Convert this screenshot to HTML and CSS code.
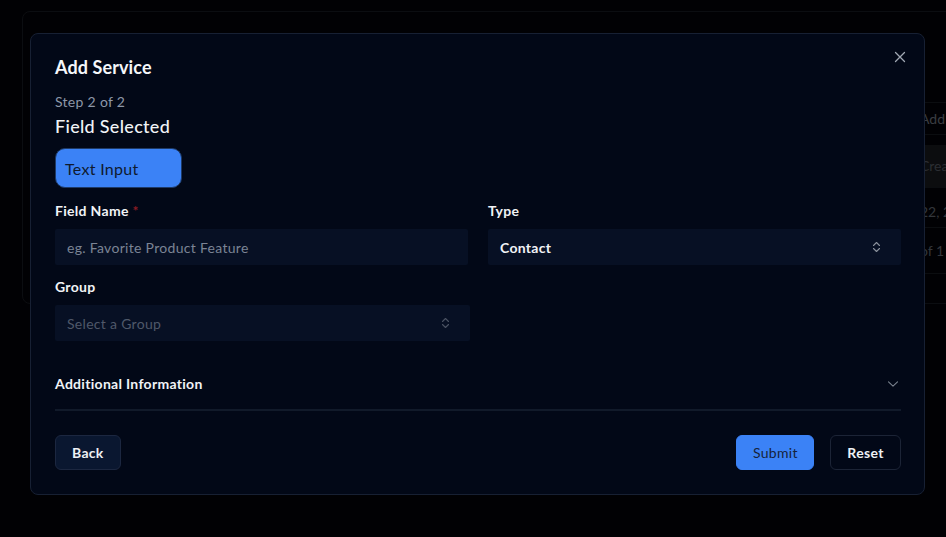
FILE: index.html
```html
<!DOCTYPE html>
<html lang="en">
<head>
    <meta charset="UTF-8">
    <meta name="viewport" content="width=device-width, initial-scale=1.0">
    <title>Services</title>
    <link rel="stylesheet" href="styles.css">
</head>
<body>
    <!-- Page behind the dialog -->
    <div class="page">
        <div class="bg-card">
            <div class="bg-table">
                <div class="bg-row bg-top">Add</div>
                <div class="bg-row bg-head">Crea</div>
                <div class="bg-row">22, 2</div>
                <div class="bg-row bg-foot">of 1</div>
            </div>
        </div>
    </div>

    <div class="overlay"></div>

    <!-- Add Service dialog -->
    <div class="modal">
        <button class="close-btn" aria-label="Close">
            <svg width="12" height="12" viewBox="0 0 12 12"><path d="M1.5 1.5l9 9M10.5 1.5l-9 9" stroke="currentColor" stroke-width="1.3" stroke-linecap="round"/></svg>
        </button>

        <h2 class="modal-title">Add Service</h2>
        <div class="step">Step 2 of 2</div>
        <div class="step-title">Field Selected</div>
        <div class="chip">Text Input</div>

        <div class="form-grid">
            <div class="field">
                <label>Field Name <span class="req">*</span></label>
                <input type="text" class="input" placeholder="eg. Favorite Product Feature">
            </div>
            <div class="field">
                <label>Type</label>
                <div class="select">
                    <span>Contact</span>
                    <svg class="updown" width="9" height="12" viewBox="0 0 9 12"><path d="M1.5 4.5L4.5 1.5 7.5 4.5M1.5 7.5L4.5 10.5 7.5 7.5" fill="none" stroke="currentColor" stroke-width="1.1" stroke-linecap="round" stroke-linejoin="round"/></svg>
                </div>
            </div>
            <div class="field field-group">
                <label>Group</label>
                <div class="select muted">
                    <span>Select a Group</span>
                    <svg class="updown" width="9" height="12" viewBox="0 0 9 12"><path d="M1.5 4.5L4.5 1.5 7.5 4.5M1.5 7.5L4.5 10.5 7.5 7.5" fill="none" stroke="currentColor" stroke-width="1.1" stroke-linecap="round" stroke-linejoin="round"/></svg>
                </div>
            </div>
        </div>

        <div class="accordion">
            <span>Additional Information</span>
            <svg width="12" height="8" viewBox="0 0 12 8"><path d="M1.5 1.8L6 6.2 10.5 1.8" fill="none" stroke="currentColor" stroke-width="1.1" stroke-linecap="round" stroke-linejoin="round"/></svg>
        </div>

        <div class="actions">
            <button class="btn btn-dark">Back</button>
            <div class="actions-right">
                <button class="btn btn-primary">Submit</button>
                <button class="btn btn-outline">Reset</button>
            </div>
        </div>
    </div>
</body>
</html>
```

FILE: styles.css
```css
body {
    margin: 0;
    background: #020205;
    font-family: Lato, "Noto Sans", sans-serif;
    letter-spacing: 0.3px;
    color: #f1f3f6;
    width: 946px;
    height: 537px;
    overflow: hidden;
}

/* Background page */
.page {
    padding: 11px 0 0 22px;
}
.bg-card {
    width: 960px;
    height: 293px;
    border: 1px solid #0e1014;
    border-radius: 8px;
    box-sizing: border-box;
}
.bg-table {
    margin: 90px 0 0 897px;
    font-size: 14px;
    letter-spacing: 0;
    color: #3d4046;
}
.bg-row {
    height: 31px;
    line-height: 31px;
    border-bottom: 1px solid #0e1013;
}
.bg-top {
    border-top: 1px solid #0e1013;
    color: #45484e;
    margin-bottom: 10px;
}
.bg-head {
    height: 42px;
    line-height: 42px;
    background: #0f1012;
    color: #34373c;
    margin-bottom: 8px;
}
.bg-foot {
    height: 45px;
    line-height: 45px;
}

.overlay {
    position: fixed;
    inset: 0;
    background: rgba(0, 0, 0, 0.15);
}

/* Dialog */
.modal {
    position: fixed;
    left: 30px;
    top: 33px;
    width: 895px;
    height: 462px;
    box-sizing: border-box;
    padding: 19px 23px 24px 24px;
    background: #020817;
    border: 1px solid #172033;
    border-radius: 8px;
}
.close-btn {
    position: absolute;
    top: 15px;
    right: 16px;
    width: 16px;
    height: 16px;
    padding: 0;
    border: none;
    background: none;
    color: #a1a8b3;
    display: flex;
    align-items: center;
    justify-content: center;
}
.modal-title {
    margin: 0;
    font-size: 18px;
    line-height: 28px;
    font-weight: 700;
    color: #f5f7fa;
    letter-spacing: 0.1px;
}
.step {
    margin-top: 11px;
    font-size: 14px;
    line-height: 20px;
    color: #8d97a8;
}
.step-title {
    font-size: 18px;
    line-height: 28px;
    font-weight: 500;
}
.chip {
    margin-top: 8px;
    width: 127px;
    height: 40px;
    box-sizing: border-box;
    padding: 0 9px;
    display: flex;
    align-items: center;
    background: #3b82f6;
    border: 1px solid #1e3a66;
    border-radius: 10px;
    color: #0f1a2e;
    font-size: 16px;
}

.form-grid {
    margin-top: 13px;
    display: grid;
    grid-template-columns: 413px 413px;
    column-gap: 20px;
    row-gap: 12px;
}
.field label {
    display: block;
    font-size: 14px;
    line-height: 20px;
    font-weight: 700;
    margin-bottom: 8px;
}
.req {
    color: #8b1c24;
}
.input,
.select {
    width: 100%;
    height: 36px;
    box-sizing: border-box;
    padding: 0 12px;
    background: #071024;
    border: none;
    border-radius: 2px;
    font-family: inherit;
    font-size: 14px;
    letter-spacing: 0.3px;
    color: #f1f3f6;
    outline: none;
}
.input::placeholder {
    color: #7b8494;
}
.select {
    display: flex;
    align-items: center;
    justify-content: space-between;
    font-weight: 700;
}
.select.muted {
    color: #4f5869;
    font-weight: 400;
}
.field-group .select {
    width: 415px;
}
.updown {
    color: #8a919c;
    margin-right: 8px;
}
.select.muted .updown {
    color: #4a5262;
}

.accordion {
    margin-top: 17px;
    padding: 16px 0 15px;
    display: flex;
    justify-content: space-between;
    align-items: center;
    font-size: 14px;
    line-height: 20px;
    font-weight: 700;
    border-bottom: 2px solid #111a2a;
}
.accordion svg {
    color: #7a828e;
    margin-right: 2px;
}

.actions {
    margin-top: 24px;
    display: flex;
    justify-content: space-between;
}
.actions-right {
    display: flex;
    gap: 16px;
}
.btn {
    height: 35px;
    padding: 0 16px;
    border-radius: 6px;
    font-family: inherit;
    font-size: 14px;
    letter-spacing: 0.3px;
    font-weight: 700;
    cursor: pointer;
}
.btn-dark {
    background: #0a1730;
    border: 1px solid #1c2740;
    color: #eef1f5;
}
.btn-primary {
    background: #3b82f6;
    border: 1px solid #3b82f6;
    color: #16233b;
    font-weight: 400;
    width: 78px;
}
.btn-outline {
    background: #020817;
    border: 1px solid #1c2436;
    color: #eef1f5;
    width: 71px;
}
```
